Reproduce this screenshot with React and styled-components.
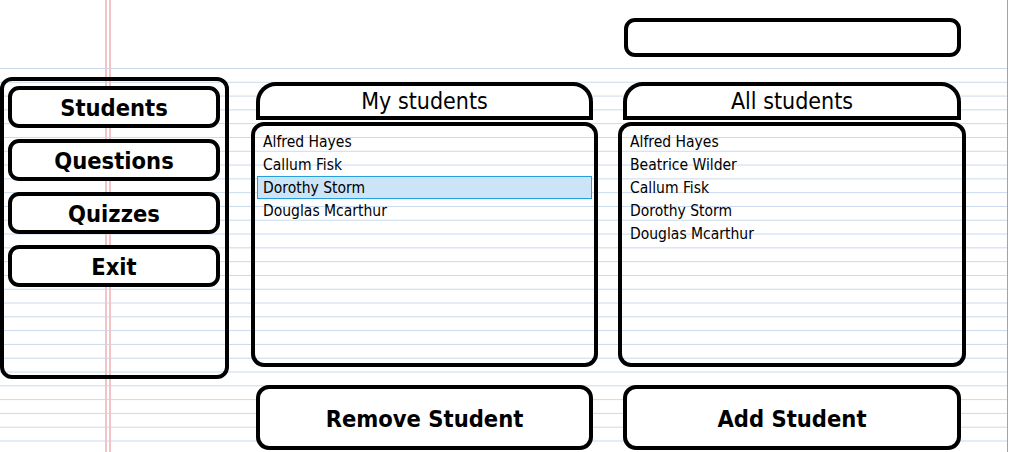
import styled, { createGlobalStyle } from "styled-components";

const GlobalStyle = createGlobalStyle`
  * {
    box-sizing: border-box;
  }

  body {
    margin: 0;
    background: #ffffff;
    font-family: "DejaVu Sans Condensed", "DejaVu Sans", sans-serif;
    font-stretch: condensed;
    color: #000;
  }
`;

const myStudents = ["Alfred Hayes", "Callum Fisk", "Dorothy Storm", "Douglas Mcarthur"];
const allStudents = [
  "Alfred Hayes",
  "Beatrice Wilder",
  "Callum Fisk",
  "Dorothy Storm",
  "Douglas Mcarthur",
];
const menu = ["Students", "Questions", "Quizzes", "Exit"];

const App = () => {
  return (
    <>
      <GlobalStyle />
      <Page>
        <MarginLine />
        <Sidebar>
          {menu.map((item) => (
            <MenuButton key={item}>{item}</MenuButton>
          ))}
        </Sidebar>

        <Column $offset="64px" $gap="22px" $width="347px">
          <Header>My students</Header>
          <List>
            {myStudents.map((name) => (
              <Row key={name} $selected={name === "Dorothy Storm"}>
                {name}
              </Row>
            ))}
          </List>
          <ActionButton>Remove Student</ActionButton>
        </Column>

        <Column $offset="0" $gap="20px" $width="348px">
          <SearchBox />
          <Header>All students</Header>
          <List>
            {allStudents.map((name) => (
              <Row key={name}>{name}</Row>
            ))}
          </List>
          <ActionButton>Add Student</ActionButton>
        </Column>
      </Page>
    </>
  );
};

// Styled Components
const Page = styled.div`
  position: relative;
  display: flex;
  align-items: flex-start;
  width: 1008px;
  height: 452px;
  padding-top: 18px;
  border-right: 1px solid #a3a3a3;
  overflow: hidden;
  background:
    linear-gradient(to bottom, #ffffff 0 67px, transparent 67px),
    linear-gradient(to bottom, #c9d9ec 0 1px, transparent 1px) 0 12.8px / 100% 13.8px repeat-y,
    #ffffff;
`;

// the red double margin line of the notebook paper, behind everything
const MarginLine = styled.div`
  position: absolute;
  top: 0;
  bottom: 0;
  left: 105px;
  width: 6px;
  border-left: 2px solid #f1c4c8;
  border-right: 2px solid #f1c4c8;
  z-index: 0;
`;

const Sidebar = styled.div`
  position: relative;
  display: flex;
  flex-direction: column;
  gap: 11px;
  width: 229px;
  height: 302px;
  margin-top: 59px;
  padding: 5px 5px 0 4px;
  border: 4px solid #000;
  border-radius: 12px;
`;

const MenuButton = styled.div`
  display: flex;
  align-items: center;
  justify-content: center;
  height: 42px;
  padding-top: 2px;
  border: 4px solid #000;
  border-radius: 11px;
  background: #fff;
  font-size: 23.5px;
  font-weight: bold;
`;

const Column = styled.div`
  display: flex;
  flex-direction: column;
  width: ${(props) => props.$width};
  margin-top: ${(props) => props.$offset};
  margin-left: ${(props) => props.$gap};
`;

const SearchBox = styled.div`
  height: 39px;
  margin: 0 5px 25px 6px;
  border: 4px solid #000;
  border-radius: 11px;
  background: #fff;
`;

const Header = styled.div`
  display: flex;
  align-items: center;
  justify-content: center;
  height: 38px;
  margin: 0 5px;
  border: 4px solid #000;
  border-radius: 20px 20px 0 0;
  background: #fff;
  font-size: 23px;
  padding-bottom: 1px;
`;

const List = styled.div`
  display: flex;
  flex-direction: column;
  height: 245px;
  margin-top: 2px;
  padding: 4px 2px 0;
  border: 4px solid #000;
  border-radius: 13px;
`;

const Row = styled.div`
  display: flex;
  align-items: center;
  height: 23px;
  padding: 1px 0 0 5px;
  border: 1px solid ${(props) => (props.$selected ? "#26a0da" : "transparent")};
  background: ${(props) => (props.$selected ? "#cce4f7" : "transparent")};
  font-size: 15.5px;
`;

const ActionButton = styled.div`
  display: flex;
  align-items: center;
  justify-content: center;
  height: 65px;
  margin: 18px 5px 0;
  padding-top: 2px;
  border: 4px solid #000;
  border-radius: 13px;
  background: #fff;
  font-size: 23.5px;
  font-weight: bold;
`;

export default App;
